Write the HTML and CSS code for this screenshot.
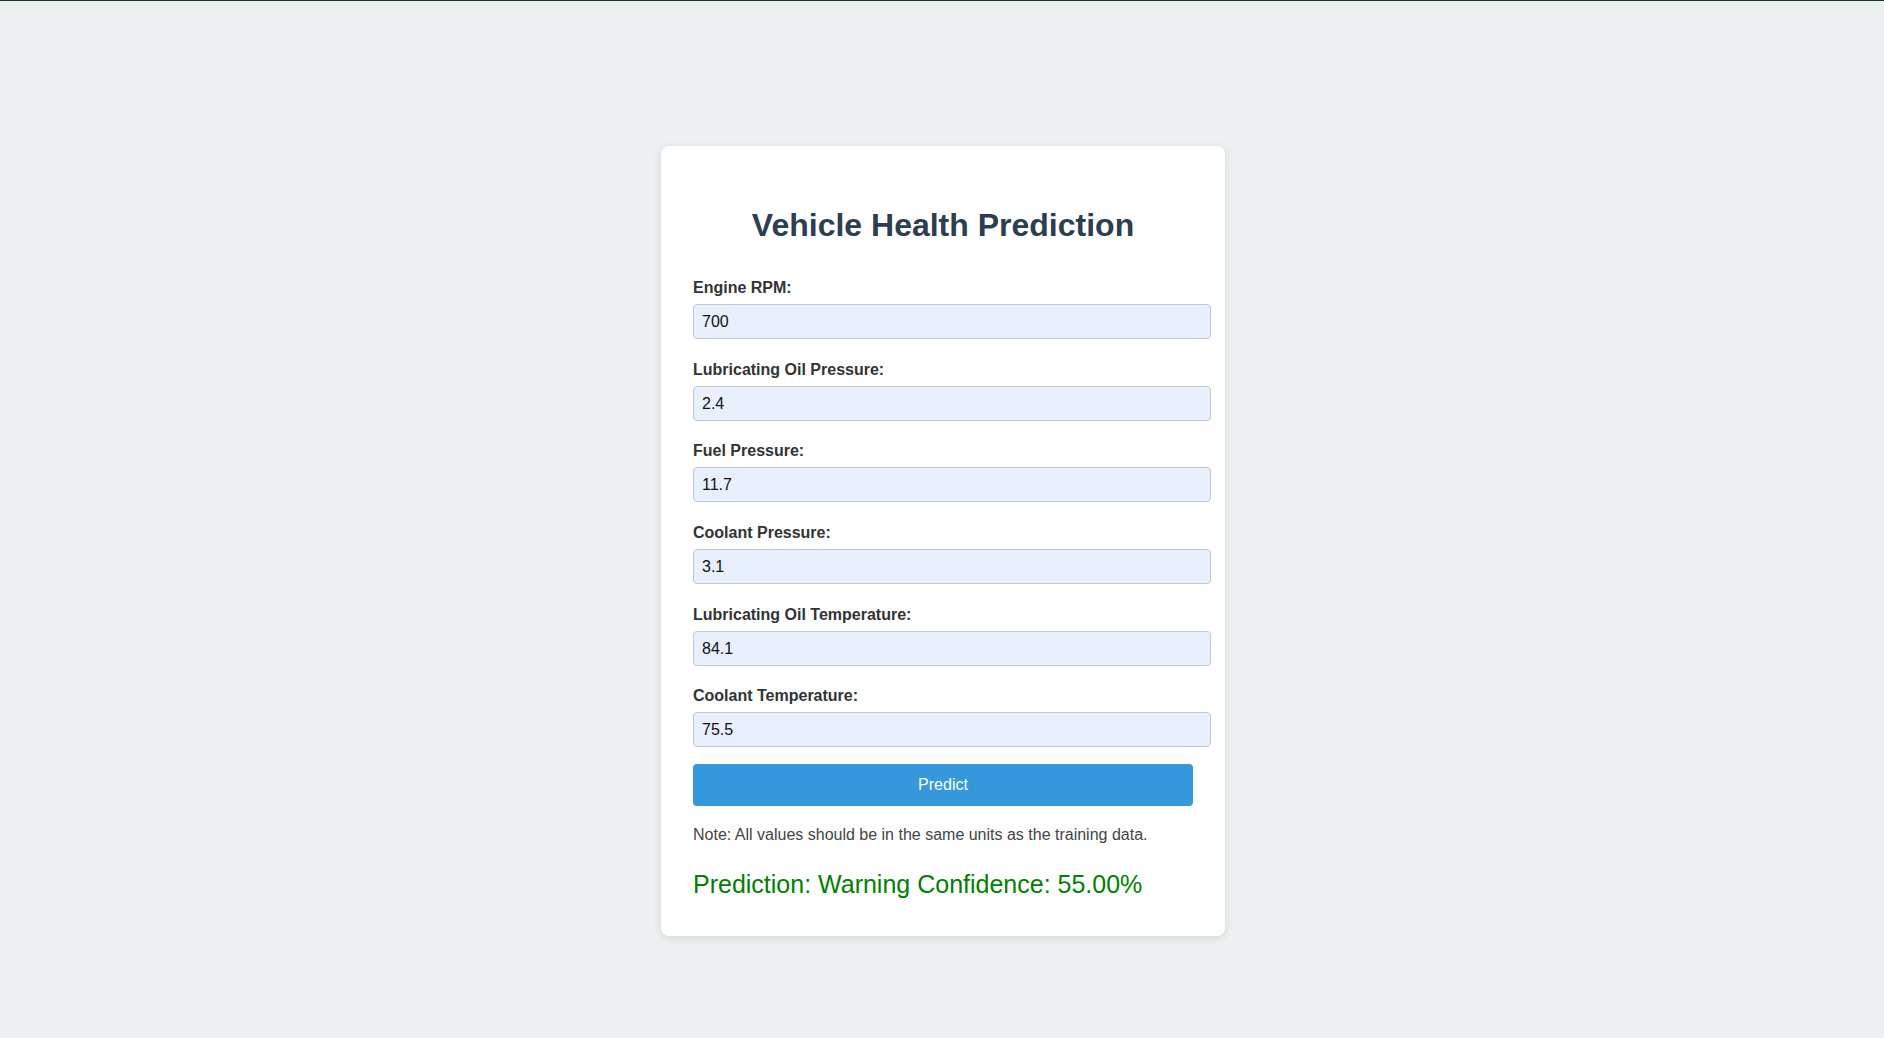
FILE: index.html
```html
<!DOCTYPE html>
<html lang="en">
<head>
<meta charset="utf-8">
<title>Vehicle Health Prediction</title>
<link rel="stylesheet" href="styles.css">
</head>
<body>
<div class="topline"></div>
<main class="page">
  <section class="card">
    <h1 class="title">Vehicle Health Prediction</h1>
    <form class="form">
      <div class="field">
        <label class="label" for="rpm">Engine RPM:</label>
        <input class="input" id="rpm" type="text" value="700">
      </div>
      <div class="field">
        <label class="label" for="lop">Lubricating Oil Pressure:</label>
        <input class="input" id="lop" type="text" value="2.4">
      </div>
      <div class="field">
        <label class="label" for="fp">Fuel Pressure:</label>
        <input class="input" id="fp" type="text" value="11.7">
      </div>
      <div class="field">
        <label class="label" for="cp">Coolant Pressure:</label>
        <input class="input" id="cp" type="text" value="3.1">
      </div>
      <div class="field">
        <label class="label" for="lot">Lubricating Oil Temperature:</label>
        <input class="input" id="lot" type="text" value="84.1">
      </div>
      <div class="field">
        <label class="label" for="ct">Coolant Temperature:</label>
        <input class="input" id="ct" type="text" value="75.5">
      </div>
      <button class="button" type="button">Predict</button>
    </form>
    <p class="note">Note: All values should be in the same units as the training data.</p>
    <p class="result">Prediction: Warning Confidence: 55.00%</p>
  </section>
</main>
</body>
</html>
```

FILE: styles.css
```css
html, body {
  margin: 0;
  padding: 0;
}

body {
  background: #ecf0f1;
  font-family: "Liberation Sans", Arial, sans-serif;
  color: #333;
  min-height: 1038px;
}

.topline {
  height: 1px;
  background: #1b3b24;
}

.page {
  display: flex;
  justify-content: center;
  padding-top: 145px;
  padding-left: 2px;
}

.card {
  width: 500px;
  background: #fff;
  border-radius: 8px;
  box-shadow: 0 2px 10px rgba(0, 0, 0, 0.1);
  padding: 61px 32px 37px;
}

.title {
  margin: 0 0 31px;
  font-size: 32px;
  font-weight: bold;
  color: #2c3e50;
  text-align: center;
}

.form {
  margin: 0;
}

.field {
  margin-bottom: 17.7px;
}

.field:last-of-type {
  margin-bottom: 16.5px;
}

.label {
  display: block;
  padding-top: 4px;
  margin-bottom: 7px;
  font-size: 16px;
  font-weight: bold;
  color: #333;
}

.input {
  display: block;
  box-sizing: content-box;
  width: 100%;
  height: 17px;
  padding: 8px;
  margin: 0;
  border: 1px solid #c4c8cf;
  border-radius: 4px;
  background: #e8f0fe;
  font-family: "Liberation Sans", Arial, sans-serif;
  font-size: 16px;
  line-height: 17px;
  color: #111;
  outline: none;
}

.button {
  display: block;
  width: 100%;
  height: 42px;
  padding: 0;
  border: none;
  border-radius: 4px;
  background: #3498db;
  color: #fff;
  font-family: "Liberation Sans", Arial, sans-serif;
  font-size: 16px;
  cursor: pointer;
}

.note {
  margin: 20px 0 0;
  font-size: 16px;
  color: #444;
}

.result {
  margin: 26px 0 0;
  font-size: 25px;
  color: #008000;
}
```
